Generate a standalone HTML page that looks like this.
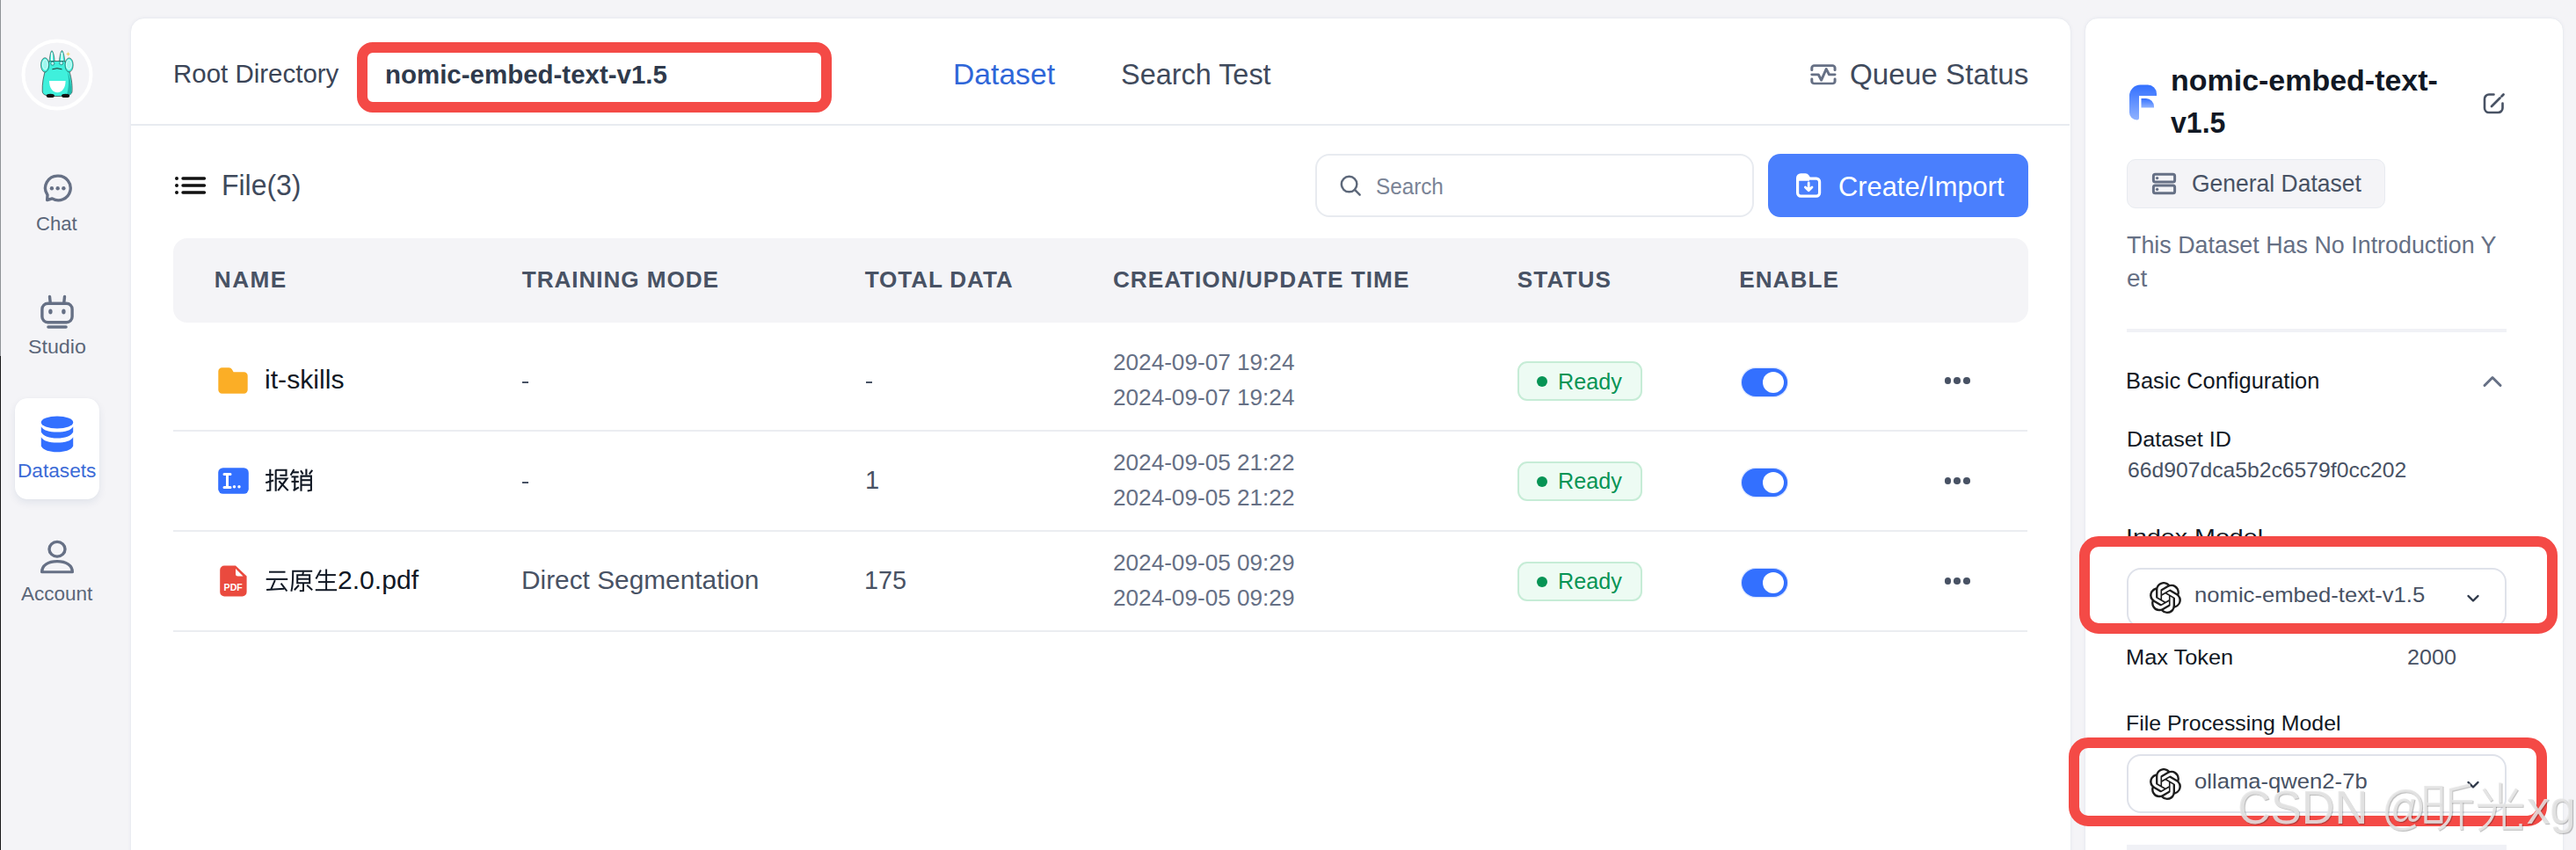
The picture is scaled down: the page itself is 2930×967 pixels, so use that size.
<!DOCTYPE html>
<html><head><meta charset="utf-8"><title>FastGPT Dataset</title>
<style>
html,body{margin:0;padding:0}
body{width:2930px;height:967px;overflow:hidden;position:relative;background:#f4f4f7;font-family:"Liberation Sans",sans-serif}
.a{position:absolute;display:block}
.t{position:absolute;white-space:nowrap;line-height:1;transform-origin:0 0;font-family:"Liberation Sans",sans-serif}
</style></head><body>
<div class="a" style="left:0px;top:0px;width:1px;height:967px;background:#8f9297"></div>
<div class="a" style="left:0px;top:405px;width:1px;height:562px;background:#1a1a1a"></div>
<svg class="a" style="left:24px;top:44px;width:82px;height:82px;" viewBox="0 0 82 82" preserveAspectRatio="none"><circle cx="41" cy="41" r="38.5" fill="#f4f4f7" stroke="#ffffff" stroke-width="4"/></svg>
<svg class="a" style="left:40px;top:50px;width:50px;height:70px;" viewBox="0 0 50 70" preserveAspectRatio="none"><path d="M16 21 C16.5 14 17.5 8.5 18.9 7.6 C20.5 8.5 22 14 22.2 21Z" fill="#3ff0dc" stroke="#222" stroke-width="0.5"/><path d="M27.2 21 C27.8 14 29 8.5 30.5 7.4 C32 8.5 33.5 14 33.8 21Z" fill="#3ff0dc" stroke="#222" stroke-width="0.5"/><path d="M18 10.5 C18.6 9 19.4 9 19.8 10.5 L20 19 L18 19Z" fill="#e9fffb"/><path d="M29.5 10.5 C30.1 9 30.9 9 31.3 10.5 L31.5 19 L29.5 19Z" fill="#e9fffb"/><path d="M12.6 27 C12.5 22 14.5 19.5 19 19.5 L31 19.5 C35.5 19.5 37.5 22 37.4 27 C41 36 42.5 46 42 54 C41.6 58 38 59.5 25 59.5 C12 59.5 8.6 58 8.2 54 C7.8 46 9.2 36 12.6 27Z" fill="#3ff0dc" stroke="#1b1b1b" stroke-width="0.6"/><path d="M36.5 30 C40 38 41.6 47 41 56 C40 58 38 59 35.5 59.2 C38.5 50 38.8 40 36.5 30Z" fill="#20b9ad"/><ellipse cx="11.1" cy="23.9" rx="4.6" ry="8.2" fill="#3ff0dc" stroke="#1b1b1b" stroke-width="0.5"/><ellipse cx="11.3" cy="23.5" rx="3" ry="5.8" fill="#9ff8ee" stroke="#fff" stroke-width="0.8"/><ellipse cx="38.6" cy="23.9" rx="4.6" ry="8" fill="#3ff0dc" stroke="#1b1b1b" stroke-width="0.5"/><ellipse cx="38.4" cy="23.5" rx="3" ry="5.6" fill="#9ff8ee" stroke="#fff" stroke-width="0.8"/><circle cx="19.8" cy="22.2" r="2" fill="#bff" stroke="#137a72" stroke-width="0.8"/><circle cx="29.7" cy="21.8" r="2" fill="#bff" stroke="#137a72" stroke-width="0.8"/><path d="M19.4 28.8 Q25 26.6 30.5 28.8" stroke="#1b1b1b" stroke-width="0.9" fill="none"/><path d="M16 42 H34.6 C34.6 50 30.5 55.2 25.3 55.2 C20 55.2 16 50 16 42Z" fill="#ffffff"/><ellipse cx="17.3" cy="58.9" rx="4.6" ry="2.2" fill="#111"/><ellipse cx="34.6" cy="58.9" rx="4.6" ry="2.2" fill="#111"/><path d="M37.5 9 l0.8 1.7 1.7 0.8 -1.7 0.8 -0.8 1.7 -0.8 -1.7 -1.7 -0.8 1.7 -0.8z" fill="#f3d36b"/></svg>
<svg class="a" style="left:47.9px;top:197.1px;width:36.4px;height:33.70000000000002px;" viewBox="0 0 40 37" preserveAspectRatio="none"><path d="M20 3.4 A15.2 15.2 0 1 1 12.5 31.7 L6.2 33.6 L6.6 27.2 A15.2 15.2 0 0 1 20 3.4Z" fill="none" stroke="#667085" stroke-width="3.7" stroke-linejoin="round"/><circle cx="12" cy="19" r="2.4" fill="#667085"/><circle cx="19.4" cy="19" r="2.4" fill="#667085"/><circle cx="26.8" cy="19" r="2.4" fill="#667085"/></svg>
<svg class="a" style="left:44px;top:334px;width:42px;height:42px;" viewBox="0 0 42 42" preserveAspectRatio="none"><rect x="3.9" y="11.2" width="34.2" height="21.6" rx="6.5" fill="none" stroke="#667085" stroke-width="3.4"/><path d="M12.5 3.5 L13.2 10 M29.5 3.5 L28.8 10" stroke="#667085" stroke-width="3.4" stroke-linecap="round"/><ellipse cx="13.4" cy="20.5" rx="2.2" ry="3" fill="#667085"/><ellipse cx="28.4" cy="20.5" rx="2.2" ry="3" fill="#667085"/><path d="M11 38 L31 38" stroke="#667085" stroke-width="3.6" stroke-linecap="round"/></svg>
<div class="a" style="left:17px;top:453px;width:96px;height:115px;background:#fff;border-radius:14px;box-shadow:0 4px 10px rgba(19,51,107,0.08),0 0 1px rgba(19,51,107,0.08)"></div>
<svg class="a" style="left:46px;top:473px;width:38px;height:42px;" viewBox="0 0 38 42" preserveAspectRatio="none"><ellipse cx="19" cy="7.5" rx="18.2" ry="6.9" fill="#3370ff"/><path d="M0.8 12.2 C3 16.5 10 18.6 19 18.6 C28 18.6 35 16.5 37.2 12.2 L37.2 18.4 C35 23 28 25.4 19 25.4 C10 25.4 3 23 0.8 18.4Z" fill="#3370ff"/><path d="M0.8 24.2 C3 28.5 10 30.6 19 30.6 C28 30.6 35 28.5 37.2 24.2 L37.2 34.5 C35 38.8 28 41.3 19 41.3 C10 41.3 3 38.8 0.8 34.5Z" fill="#3370ff"/></svg>
<svg class="a" style="left:44px;top:614px;width:42px;height:40px;" viewBox="0 0 42 43" preserveAspectRatio="none"><circle cx="21" cy="11.5" r="9" fill="none" stroke="#667085" stroke-width="3.4"/><path d="M3.7 39.5 C3.7 31 11 26.5 21 26.5 C31 26.5 38.3 31 38.3 39.5 Z" fill="none" stroke="#667085" stroke-width="3.4" stroke-linejoin="round"/></svg>
<div class="a" style="left:148px;top:20px;width:2208px;height:980px;background:#fff;border:1px solid #eaecf1;border-radius:16px;box-sizing:border-box;box-shadow:0 0 4px rgba(19,51,107,0.045)"></div>
<div class="a" style="left:149px;top:141px;width:2205px;height:2px;background:#e8ebf0"></div>
<div class="a" style="left:406px;top:48px;width:540px;height:80px;border:12px solid #f44a46;border-radius:18px;box-sizing:border-box"></div>
<svg class="a" style="left:2058.1px;top:73px;width:31.90000000000009px;height:23.700000000000003px;" viewBox="0 0 34 28" preserveAspectRatio="none"><path d="M3 8 V5 A3 3 0 0 1 6 2 H28 A3 3 0 0 1 31 5 V8 M3 20 V23 A3 3 0 0 0 6 26 H28 A3 3 0 0 0 31 23 V20" fill="none" stroke="#667085" stroke-width="3.2" stroke-linecap="round"/><path d="M3 14 H11 L14.5 21.5 L20.5 6.5 L24 14 H31" fill="none" stroke="#667085" stroke-width="3.2" stroke-linecap="round" stroke-linejoin="round"/></svg>
<svg class="a" style="left:198px;top:200px;width:37px;height:22px;" viewBox="0 0 37 22" preserveAspectRatio="none"><circle cx="3" cy="3" r="2" fill="#111"/><circle cx="3" cy="11" r="2" fill="#111"/><circle cx="3" cy="19" r="2" fill="#111"/><path d="M10 3 H34.5 M10 11 H34.5 M10 19 H34.5" stroke="#111" stroke-width="3.4" stroke-linecap="round"/></svg>
<div class="a" style="left:1496px;top:175px;width:499px;height:72px;border:2px solid #e8ebf0;border-radius:16px;box-sizing:border-box;background:#fff"></div>
<svg class="a" style="left:1522.8px;top:197.7px;width:26.299999999999955px;height:26.30000000000001px;" viewBox="0 0 30 30" preserveAspectRatio="none"><circle cx="13.2" cy="13.2" r="10" fill="none" stroke="#5d687a" stroke-width="2.8"/><path d="M20.5 20.5 L27 27" stroke="#5d687a" stroke-width="2.8" stroke-linecap="round"/></svg>
<div class="a" style="left:2011px;top:175px;width:296px;height:72px;background:#4a7ffd;border-radius:14px"></div>
<svg class="a" style="left:2040px;top:196px;width:33px;height:30px;" viewBox="0 0 33 30" preserveAspectRatio="none"><path d="M4.6 22.5 V6.5 A3.6 3.6 0 0 1 8.2 2.9 H13.5 A3 3 0 0 1 16 4.2 L18 7.2 H26 A3.6 3.6 0 0 1 29.6 10.8 V23.5 A3.6 3.6 0 0 1 26 27.1 H8.2 A3.6 3.6 0 0 1 4.6 23.5Z" fill="none" stroke="#fff" stroke-width="3.2" stroke-linejoin="round"/><path d="M4.6 6.5 A3.6 3.6 0 0 1 8.2 2.9 H13.5 A3 3 0 0 1 16 4.2 L18 7.2 V9.8 H4.6Z" fill="#fff"/><path d="M17.2 12 V20.5 M13.4 17 L17.2 20.7 L21 17" fill="none" stroke="#fff" stroke-width="2.8" stroke-linecap="round" stroke-linejoin="round"/></svg>
<div class="a" style="left:197px;top:271px;width:2109.5px;height:96px;background:#f4f4f7;border-radius:16px"></div>
<div class="a" style="left:197px;top:489px;width:2109px;height:2px;background:#ebedf1"></div>
<div class="a" style="left:197px;top:603px;width:2109px;height:2px;background:#ebedf1"></div>
<div class="a" style="left:197px;top:717px;width:2109px;height:2px;background:#ebedf1"></div>
<svg class="a" style="left:248px;top:418px;width:34px;height:30px;" viewBox="0 0 34 30" preserveAspectRatio="none"><path d="M0.3 4.5 A4.2 4.2 0 0 1 4.5 0.3 H12.5 A4 4 0 0 1 15.9 2.3 L17.6 5.2 H29.5 A4.2 4.2 0 0 1 33.7 9.4 V25.5 A4.2 4.2 0 0 1 29.5 29.7 H4.5 A4.2 4.2 0 0 1 0.3 25.5Z" fill="#fbae26"/></svg>
<svg class="a" style="left:248px;top:532px;width:35px;height:30px;" viewBox="0 0 35 30" preserveAspectRatio="none"><rect x="0.2" y="0.2" width="34.6" height="29.6" rx="5.5" fill="#3370ff"/><path d="M7 7.5 H14 M10.5 7.5 V22.5 M7 22.5 H14" stroke="#fff" stroke-width="3" stroke-linecap="round"/><circle cx="18.5" cy="21.8" r="1.7" fill="#fff"/><circle cx="24" cy="21.8" r="1.7" fill="#fff"/></svg>
<svg class="a" style="left:250px;top:643px;width:31px;height:36px;" viewBox="0 0 31 36" preserveAspectRatio="none"><path d="M0.2 5.5 A5 5 0 0 1 5.2 0.5 H18 L30.6 12.5 V30.5 A5 5 0 0 1 25.6 35.5 H5.2 A5 5 0 0 1 0.2 30.5Z" fill="#ea4a3e"/><path d="M18 4 L26.5 12.4 H20.5 A2.5 2.5 0 0 1 18 9.9Z" fill="#fff"/><text x="15.2" y="29.4" font-family="Liberation Sans" font-weight="700" font-size="10.6" fill="#fff" text-anchor="middle">PDF</text></svg>
<div class="a" style="left:594px;top:434px;width:7px;height:2.3999999999999773px;background:#485264"></div>
<div class="a" style="left:984.5px;top:434px;width:7.0px;height:2.3999999999999773px;background:#485264"></div>
<div class="a" style="left:594px;top:548px;width:7px;height:2.3999999999999773px;background:#485264"></div>
<div class="a" style="left:1726px;top:411px;width:142px;height:45px;background:#edfbf3;border:2px solid #c6ecd6;border-radius:11px;box-sizing:border-box"></div>
<div class="a" style="left:1748px;top:427.6px;width:12.4px;height:12.4px;border-radius:50%;background:#079455"></div>
<div class="a" style="left:1981.3px;top:418.8px;width:51.40000000000009px;height:32.39999999999998px;background:#3370ff;border-radius:17px;box-shadow:0 0 0 1.2px #d9e4ff"></div>
<div class="a" style="left:2004.9px;top:422.7px;width:24.2px;height:24.2px;border-radius:50%;background:#fff"></div>
<div class="a" style="left:2211.5px;top:429.2px;width:7.6px;height:7.6px;border-radius:50%;background:#485264"></div>
<div class="a" style="left:2222.3px;top:429.2px;width:7.6px;height:7.6px;border-radius:50%;background:#485264"></div>
<div class="a" style="left:2233.1px;top:429.2px;width:7.6px;height:7.6px;border-radius:50%;background:#485264"></div>
<div class="a" style="left:1726px;top:525px;width:142px;height:45px;background:#edfbf3;border:2px solid #c6ecd6;border-radius:11px;box-sizing:border-box"></div>
<div class="a" style="left:1748px;top:541.6px;width:12.4px;height:12.4px;border-radius:50%;background:#079455"></div>
<div class="a" style="left:1981.3px;top:532.8px;width:51.40000000000009px;height:32.40000000000009px;background:#3370ff;border-radius:17px;box-shadow:0 0 0 1.2px #d9e4ff"></div>
<div class="a" style="left:2004.9px;top:536.7px;width:24.2px;height:24.2px;border-radius:50%;background:#fff"></div>
<div class="a" style="left:2211.5px;top:543.2px;width:7.6px;height:7.6px;border-radius:50%;background:#485264"></div>
<div class="a" style="left:2222.3px;top:543.2px;width:7.6px;height:7.6px;border-radius:50%;background:#485264"></div>
<div class="a" style="left:2233.1px;top:543.2px;width:7.6px;height:7.6px;border-radius:50%;background:#485264"></div>
<div class="a" style="left:1726px;top:639px;width:142px;height:45px;background:#edfbf3;border:2px solid #c6ecd6;border-radius:11px;box-sizing:border-box"></div>
<div class="a" style="left:1748px;top:655.6px;width:12.4px;height:12.4px;border-radius:50%;background:#079455"></div>
<div class="a" style="left:1981.3px;top:646.8px;width:51.40000000000009px;height:32.40000000000009px;background:#3370ff;border-radius:17px;box-shadow:0 0 0 1.2px #d9e4ff"></div>
<div class="a" style="left:2004.9px;top:650.7px;width:24.2px;height:24.2px;border-radius:50%;background:#fff"></div>
<div class="a" style="left:2211.5px;top:657.2px;width:7.6px;height:7.6px;border-radius:50%;background:#485264"></div>
<div class="a" style="left:2222.3px;top:657.2px;width:7.6px;height:7.6px;border-radius:50%;background:#485264"></div>
<div class="a" style="left:2233.1px;top:657.2px;width:7.6px;height:7.6px;border-radius:50%;background:#485264"></div>
<div class="a" style="left:2370.5px;top:20px;width:545.5px;height:980px;background:#fff;border:1px solid #eaecf1;border-radius:15px;box-sizing:border-box;box-shadow:0 0 4px rgba(19,51,107,0.045)"></div>
<svg class="a" style="left:2421px;top:96px;width:34px;height:41px;" viewBox="0 0 34 41" preserveAspectRatio="none"><defs><linearGradient id="lg" x1="0" y1="0" x2="0" y2="1"><stop offset="0" stop-color="#3370ff"/><stop offset="1" stop-color="#8fb2ff"/></linearGradient></defs><path d="M1 13 A12.5 12.5 0 0 1 13.5 0.5 H22 A10 10 0 0 1 32 10.5 V13 H12 V38 A2.5 2.5 0 0 1 9.5 40.5 A8.5 8.5 0 0 1 1 32Z" fill="url(#lg)"/><path d="M14.5 16 H20 A9 9 0 0 1 29 25 V26.5 H14.5Z" fill="url(#lg)"/></svg>
<svg class="a" style="left:2823px;top:104px;width:28px;height:27px;" viewBox="0 0 28 27" preserveAspectRatio="none"><path d="M13.5 3.5 H8 A5 5 0 0 0 3 8.5 V19 A5 5 0 0 0 8 24 H18.5 A5 5 0 0 0 23.5 19 V13.5" fill="none" stroke="#485264" stroke-width="2.6" stroke-linecap="round"/><path d="M11 17 L20.5 7.5 M22.5 5.5 L24.5 3.5" stroke="#485264" stroke-width="2.8" stroke-linecap="round"/></svg>
<div class="a" style="left:2419px;top:181px;width:294px;height:56px;background:#f4f4f7;border:1.5px solid #e8ebf0;border-radius:10px;box-sizing:border-box"></div>
<svg class="a" style="left:2446px;top:195px;width:31px;height:28px;" viewBox="0 0 31 28" preserveAspectRatio="none"><rect x="3.4" y="3.2" width="24.2" height="8.8" rx="2" fill="none" stroke="#667085" stroke-width="3"/><rect x="3.4" y="16" width="24.2" height="8.8" rx="2" fill="none" stroke="#667085" stroke-width="3"/><circle cx="7.6" cy="7.6" r="1.7" fill="#667085"/><circle cx="7.6" cy="20.4" r="1.7" fill="#667085"/></svg>
<div class="a" style="left:2419px;top:374px;width:432px;height:4px;background:#f0f1f6"></div>
<svg class="a" style="left:2823px;top:425px;width:24px;height:17px;" viewBox="0 0 24 17" preserveAspectRatio="none"><path d="M3 13.5 L12 4.5 L21 13.5" fill="none" stroke="#667085" stroke-width="3" stroke-linecap="round" stroke-linejoin="round"/></svg>
<div class="a" style="left:2419px;top:646px;width:432px;height:68px;border:2px solid #dfe2ea;border-radius:16px;box-sizing:border-box;background:#fff"></div>
<svg class="a" style="left:2445px;top:662px;width:36px;height:36px;" viewBox="0 0 24 24" preserveAspectRatio="none"><path d="M22.2819 9.8211a5.9847 5.9847 0 0 0-.5157-4.9108 6.0462 6.0462 0 0 0-6.5098-2.9A6.0651 6.0651 0 0 0 4.9807 4.1818a5.9847 5.9847 0 0 0-3.9977 2.9 6.0462 6.0462 0 0 0 .7427 7.0966 5.98 5.98 0 0 0 .511 4.9107 6.051 6.051 0 0 0 6.5146 2.9001A5.9847 5.9847 0 0 0 13.2599 24a6.0557 6.0557 0 0 0 5.7718-4.2058 5.9894 5.9894 0 0 0 3.9977-2.9001 6.0557 6.0557 0 0 0-.7475-7.0729zm-9.022 12.6081a4.4755 4.4755 0 0 1-2.8764-1.0408l.1419-.0804 4.7783-2.7582a.7948.7948 0 0 0 .3927-.6813v-6.7369l2.02 1.1686a.071.071 0 0 1 .038.052v5.5826a4.504 4.504 0 0 1-4.4945 4.4944zm-9.6607-4.1254a4.4708 4.4708 0 0 1-.5346-3.0137l.142.0852 4.783 2.7582a.7712.7712 0 0 0 .7806 0l5.8428-3.3685v2.3324a.0804.0804 0 0 1-.0332.0615L9.74 19.9502a4.4992 4.4992 0 0 1-6.1408-1.6464zM2.3408 7.8956a4.485 4.485 0 0 1 2.3655-1.9728V11.6a.7664.7664 0 0 0 .3879.6765l5.8144 3.3543-2.0201 1.1685a.0757.0757 0 0 1-.071 0l-4.8303-2.7865A4.504 4.504 0 0 1 2.3408 7.872zm16.5963 3.8558L13.1038 8.364 15.1192 7.2a.0757.0757 0 0 1 .071 0l4.8303 2.7913a4.4944 4.4944 0 0 1-.6765 8.1042v-5.6772a.79.79 0 0 0-.407-.667zm2.0107-3.0231l-.142-.0852-4.7735-2.7818a.7759.7759 0 0 0-.7854 0L9.409 9.2297V6.8974a.0662.0662 0 0 1 .0284-.0615l4.8303-2.7866a4.4992 4.4992 0 0 1 6.6802 4.66zM8.3065 12.863l-2.02-1.1638a.0804.0804 0 0 1-.038-.0567V6.0742a4.4992 4.4992 0 0 1 7.3757-3.4537l-.142.0805L8.704 5.459a.7948.7948 0 0 0-.3927.6813zm1.0976-2.3654l2.602-1.4998 2.6069 1.4998v2.9994l-2.5974 1.4997-2.6067-1.4997Z" fill="#1d1d1d"/></svg>
<svg class="a" style="left:2804px;top:673px;width:18px;height:15px;" viewBox="0 0 18 15" preserveAspectRatio="none"><path d="M3.5 5 L9 10.5 L14.5 5" fill="none" stroke="#2d3748" stroke-width="2.4" stroke-linecap="round" stroke-linejoin="round"/></svg>
<div class="a" style="left:2419px;top:858px;width:432px;height:67px;border:2px solid #dfe2ea;border-radius:16px;box-sizing:border-box;background:#fff"></div>
<svg class="a" style="left:2445px;top:874px;width:36px;height:36px;" viewBox="0 0 24 24" preserveAspectRatio="none"><path d="M22.2819 9.8211a5.9847 5.9847 0 0 0-.5157-4.9108 6.0462 6.0462 0 0 0-6.5098-2.9A6.0651 6.0651 0 0 0 4.9807 4.1818a5.9847 5.9847 0 0 0-3.9977 2.9 6.0462 6.0462 0 0 0 .7427 7.0966 5.98 5.98 0 0 0 .511 4.9107 6.051 6.051 0 0 0 6.5146 2.9001A5.9847 5.9847 0 0 0 13.2599 24a6.0557 6.0557 0 0 0 5.7718-4.2058 5.9894 5.9894 0 0 0 3.9977-2.9001 6.0557 6.0557 0 0 0-.7475-7.0729zm-9.022 12.6081a4.4755 4.4755 0 0 1-2.8764-1.0408l.1419-.0804 4.7783-2.7582a.7948.7948 0 0 0 .3927-.6813v-6.7369l2.02 1.1686a.071.071 0 0 1 .038.052v5.5826a4.504 4.504 0 0 1-4.4945 4.4944zm-9.6607-4.1254a4.4708 4.4708 0 0 1-.5346-3.0137l.142.0852 4.783 2.7582a.7712.7712 0 0 0 .7806 0l5.8428-3.3685v2.3324a.0804.0804 0 0 1-.0332.0615L9.74 19.9502a4.4992 4.4992 0 0 1-6.1408-1.6464zM2.3408 7.8956a4.485 4.485 0 0 1 2.3655-1.9728V11.6a.7664.7664 0 0 0 .3879.6765l5.8144 3.3543-2.0201 1.1685a.0757.0757 0 0 1-.071 0l-4.8303-2.7865A4.504 4.504 0 0 1 2.3408 7.872zm16.5963 3.8558L13.1038 8.364 15.1192 7.2a.0757.0757 0 0 1 .071 0l4.8303 2.7913a4.4944 4.4944 0 0 1-.6765 8.1042v-5.6772a.79.79 0 0 0-.407-.667zm2.0107-3.0231l-.142-.0852-4.7735-2.7818a.7759.7759 0 0 0-.7854 0L9.409 9.2297V6.8974a.0662.0662 0 0 1 .0284-.0615l4.8303-2.7866a4.4992 4.4992 0 0 1 6.6802 4.66zM8.3065 12.863l-2.02-1.1638a.0804.0804 0 0 1-.038-.0567V6.0742a4.4992 4.4992 0 0 1 7.3757-3.4537l-.142.0805L8.704 5.459a.7948.7948 0 0 0-.3927.6813zm1.0976-2.3654l2.602-1.4998 2.6069 1.4998v2.9994l-2.5974 1.4997-2.6067-1.4997Z" fill="#1d1d1d"/></svg>
<svg class="a" style="left:2804px;top:885px;width:18px;height:15px;" viewBox="0 0 18 15" preserveAspectRatio="none"><path d="M3.5 5 L9 10.5 L14.5 5" fill="none" stroke="#2d3748" stroke-width="2.4" stroke-linecap="round" stroke-linejoin="round"/></svg>
<div class="a" style="left:2419px;top:961px;width:432px;height:9px;background:#f0f1f6"></div>
<svg class="a" style="left:298px;top:528px;width:62px;height:36px;" viewBox="0 0 62 36" preserveAspectRatio="none"><g fill="none" stroke="#111824" stroke-width="2.1" stroke-linecap="butt" stroke-linejoin="miter"><path d="M4.2 12.1 H13.1"/><path d="M9.3 5.7 V29.7 L5.1 30.3"/><path d="M4.2 21.2 L13.1 18.6"/><path d="M15.7 6.4 V30.8"/><path d="M15.7 6.8 H27.5 V12.7 H20.3"/><path d="M15.7 16.5 H28.4 L18.2 30.1"/><path d="M19.3 19.2 L29.7 30.1"/><path d="M36.4 5.9 L32.6 12.7"/><path d="M34.7 9.3 H41.9"/><path d="M33.5 14.4 H41.5"/><path d="M33.5 19.9 H41.9"/><path d="M37.3 14.4 V29.7"/><path d="M35.6 30 L41.9 26.3"/><path d="M50.4 5.5 V12.7"/><path d="M44.0 7.2 L46.6 11.4"/><path d="M57.2 6.8 L53.8 11.4"/><path d="M44.5 30.8 V13.6 H55.9 V29.7 L51.7 30.5"/><path d="M44.5 18.2 H55.9"/><path d="M44.5 23.7 H55.9"/></g></svg>
<svg class="a" style="left:298px;top:642px;width:90px;height:36px;" viewBox="0 0 90 36" preserveAspectRatio="none"><g fill="none" stroke="#111824" stroke-width="2.0" stroke-linecap="butt" stroke-linejoin="miter"><path d="M8.0 8.7 H26.5"/><path d="M4.7 16.9 H29.2"/><path d="M14.8 18.2 L10.4 28.2"/><path d="M5.1 29.0 L25.4 27.7"/><path d="M21.6 21.6 L28.4 30.5"/><path d="M57.2 7.8 H35.2 C35.2 20 34.9 26 33.3 30.8"/><path d="M47.0 8.5 L46.2 12.3"/><path d="M40.2 12.3 H54.2 V21.2 H40.2 Z"/><path d="M40.2 16.7 H54.2"/><path d="M47.0 21.2 V30.0 L42.8 30.3"/><path d="M41.9 23.7 L36.8 29.2"/><path d="M51.2 23.7 L57.2 29.2"/><path d="M66.9 6.4 L61.4 16.5"/><path d="M65.2 12.1 H83.9"/><path d="M73.1 5.5 V29.2"/><path d="M64.0 20.1 H82.8"/><path d="M60.8 29.2 H85.1"/></g></svg>
<div class="t" style="left:41.26px;top:244.43px;font-size:21.22px;font-weight:400;color:#5b6679;transform:scaleX(1.0386);">Chat</div>
<div class="t" style="left:32.21px;top:384.03px;font-size:21.22px;font-weight:400;color:#5b6679;transform:scaleX(1.0948);">Studio</div>
<div class="t" style="left:19.86px;top:524.93px;font-size:21.22px;font-weight:400;color:#3b6ad6;transform:scaleX(1.0679);">Datasets</div>
<div class="t" style="left:23.80px;top:665.03px;font-size:21.22px;font-weight:400;color:#5b6679;transform:scaleX(1.0610);">Account</div>
<div class="t" style="left:197.37px;top:70.29px;font-size:29.07px;font-weight:400;color:#3b4557;transform:scaleX(1.0141);">Root Directory</div>
<div class="t" style="left:438.30px;top:69.72px;font-size:29.51px;font-weight:700;color:#2f3a4c;transform:scaleX(0.9987);">nomic-embed-text-v1.5</div>
<div class="t" style="left:1084.38px;top:67.59px;font-size:33.43px;font-weight:400;color:#2f66d8;transform:scaleX(1.0071);">Dataset</div>
<div class="t" style="left:1274.76px;top:67.59px;font-size:33.43px;font-weight:400;color:#3f4a5c;transform:scaleX(0.9701);">Search Test</div>
<div class="t" style="left:2104.01px;top:67.69px;font-size:33.43px;font-weight:400;color:#3f4a5c;transform:scaleX(0.9950);">Queue Status</div>
<div class="t" style="left:252.13px;top:193.69px;font-size:33.43px;font-weight:400;color:#3f4a5c;transform:scaleX(0.9556);">File(3)</div>
<div class="t" style="left:1565.47px;top:199.35px;font-size:26.16px;font-weight:400;color:#7a8496;transform:scaleX(0.9275);">Search</div>
<div class="t" style="left:2090.99px;top:196.66px;font-size:30.52px;font-weight:400;color:#ffffff;transform:scaleX(1.0108);">Create/Import</div>
<div class="t" style="left:243.80px;top:305.05px;font-size:26.16px;font-weight:700;color:#485264;transform:scaleX(1.0000);letter-spacing:1.500px;">NAME</div>
<div class="t" style="left:593.80px;top:305.05px;font-size:26.16px;font-weight:700;color:#485264;transform:scaleX(1.0000);letter-spacing:0.917px;">TRAINING MODE</div>
<div class="t" style="left:983.70px;top:305.05px;font-size:26.16px;font-weight:700;color:#485264;transform:scaleX(1.0000);letter-spacing:0.856px;">TOTAL DATA</div>
<div class="t" style="left:1265.90px;top:305.05px;font-size:26.16px;font-weight:700;color:#485264;transform:scaleX(1.0000);letter-spacing:1.011px;">CREATION/UPDATE TIME</div>
<div class="t" style="left:1725.80px;top:305.05px;font-size:26.16px;font-weight:700;color:#485264;transform:scaleX(1.0000);letter-spacing:1.060px;">STATUS</div>
<div class="t" style="left:1978.20px;top:305.05px;font-size:26.16px;font-weight:700;color:#485264;transform:scaleX(1.0000);letter-spacing:1.040px;">ENABLE</div>
<div class="t" style="left:300.52px;top:418.39px;font-size:29.07px;font-weight:400;color:#111824;transform:scaleX(1.0381);">it-skills</div>
<div class="t" style="left:383.96px;top:646.49px;font-size:29.07px;font-weight:400;color:#111824;transform:scaleX(1.0364);">2.0.pdf</div>
<div class="t" style="left:593.15px;top:646.49px;font-size:29.07px;font-weight:400;color:#485264;transform:scaleX(1.0265);">Direct Segmentation</div>
<div class="t" style="left:984.00px;top:532.19px;font-size:29.07px;font-weight:400;color:#485264;transform:scaleX(1.0000);">1</div>
<div class="t" style="left:983.42px;top:646.49px;font-size:29.07px;font-weight:400;color:#485264;transform:scaleX(0.9911);">175</div>
<div class="t" style="left:1266.02px;top:399.28px;font-size:26.60px;font-weight:400;color:#667085;transform:scaleX(0.9832);">2024-09-07 19:24</div>
<div class="t" style="left:1266.02px;top:439.28px;font-size:26.60px;font-weight:400;color:#667085;transform:scaleX(0.9832);">2024-09-07 19:24</div>
<div class="t" style="left:1266.02px;top:513.28px;font-size:26.60px;font-weight:400;color:#667085;transform:scaleX(0.9832);">2024-09-05 21:22</div>
<div class="t" style="left:1266.02px;top:553.28px;font-size:26.60px;font-weight:400;color:#667085;transform:scaleX(0.9832);">2024-09-05 21:22</div>
<div class="t" style="left:1266.02px;top:627.28px;font-size:26.60px;font-weight:400;color:#667085;transform:scaleX(0.9832);">2024-09-05 09:29</div>
<div class="t" style="left:1266.02px;top:667.28px;font-size:26.60px;font-weight:400;color:#667085;transform:scaleX(0.9832);">2024-09-05 09:29</div>
<div class="t" style="left:1772.48px;top:420.65px;font-size:26.16px;font-weight:400;color:#079455;transform:scaleX(0.9622);">Ready</div>
<div class="t" style="left:1772.48px;top:534.15px;font-size:26.16px;font-weight:400;color:#079455;transform:scaleX(0.9622);">Ready</div>
<div class="t" style="left:1772.48px;top:647.65px;font-size:26.16px;font-weight:400;color:#079455;transform:scaleX(0.9622);">Ready</div>
<div class="t" style="left:2468.51px;top:75.93px;font-size:32.56px;font-weight:700;color:#111824;transform:scaleX(1.0437);">nomic-embed-text-</div>
<div class="t" style="left:2469.30px;top:124.43px;font-size:32.56px;font-weight:700;color:#111824;transform:scaleX(0.9857);">v1.5</div>
<div class="t" style="left:2493.23px;top:194.66px;font-size:27.33px;font-weight:400;color:#485264;transform:scaleX(0.9687);">General Dataset</div>
<div class="t" style="left:2418.61px;top:266.11px;font-size:27.04px;font-weight:400;color:#667085;transform:scaleX(0.9936);">This Dataset Has No Introduction Y</div>
<div class="t" style="left:2418.57px;top:303.71px;font-size:27.04px;font-weight:400;color:#667085;transform:scaleX(1.0318);">et</div>
<div class="t" style="left:2418.47px;top:420.83px;font-size:25.00px;font-weight:400;color:#111824;transform:scaleX(1.0164);">Basic Configuration</div>
<div class="t" style="left:2418.51px;top:487.67px;font-size:24.13px;font-weight:400;color:#111824;transform:scaleX(1.0432);">Dataset ID</div>
<div class="t" style="left:2419.58px;top:523.07px;font-size:24.13px;font-weight:400;color:#485264;transform:scaleX(1.0240);">66d907dca5b2c6579f0cc202</div>
<div class="t" style="left:2417.62px;top:599.07px;font-size:24.13px;font-weight:400;color:#111824;transform:scaleX(1.1875);">Index Model</div>
<div class="t" style="left:2495.84px;top:666.24px;font-size:23.69px;font-weight:400;color:#485264;transform:scaleX(1.0824);">nomic-embed-text-v1.5</div>
<div class="t" style="left:2418.40px;top:735.67px;font-size:24.13px;font-weight:400;color:#111824;transform:scaleX(1.0513);">Max Token</div>
<div class="t" style="left:2738.26px;top:735.67px;font-size:24.13px;font-weight:400;color:#485264;transform:scaleX(1.0423);">2000</div>
<div class="t" style="left:2418.44px;top:811.17px;font-size:24.13px;font-weight:400;color:#111824;transform:scaleX(1.0303);">File Processing Model</div>
<div class="t" style="left:2496.42px;top:877.54px;font-size:23.69px;font-weight:400;color:#485264;transform:scaleX(1.0822);">ollama-qwen2-7b</div>
<div class="a" style="left:2365px;top:610px;width:544px;height:111px;border:12px solid #f44a46;border-radius:22px;box-sizing:border-box"></div>
<div class="a" style="left:2353px;top:839px;width:544px;height:101px;border:12px solid #f44a46;border-radius:22px;box-sizing:border-box"></div>
<div class="t" style="left:2545.08px;top:892.06px;font-size:53.78px;color:rgba(232,232,232,0.86);transform:scaleX(0.9724);text-shadow:1px 1px 1px rgba(0,0,0,0.28)">CSDN</div>
<div class="t" style="left:2708.80px;top:892.06px;font-size:53.78px;color:rgba(232,232,232,0.86);transform:scaleX(0.9239);text-shadow:1px 1px 1px rgba(0,0,0,0.28)">@</div>
<div class="t" style="left:2873.62px;top:892.06px;font-size:53.78px;color:rgba(232,232,232,0.86);transform:scaleX(0.9774);text-shadow:1px 1px 1px rgba(0,0,0,0.28)">xg</div>
<svg class="a" style="left:0;top:0;width:2930px;height:967px;overflow:visible" viewBox="0 0 2930 967"><g fill="none" stroke="rgba(0,0,0,0.22)" stroke-width="3.6" transform="translate(1,1)"><path d="M2759 935 V895.7 H2776.8 V935 Z"/><path d="M2759 914.9 H2776.8"/><path d="M2759 935 H2776.8"/><path d="M2809.8 893 L2787.5 898.4 V922.5 C2787.5 932 2782 939 2773.2 943.5"/><path d="M2787.5 911.8 H2812.5"/><path d="M2799.6 911.8 V944"/><path d="M2843.75 890.4 V913.6"/><path d="M2825 897.5 L2833.9 910.9"/><path d="M2862.5 897.5 L2853.6 911.8"/><path d="M2817.9 916.25 H2869.6"/><path d="M2837.5 916.25 C2837 930 2830 939 2819.6 944.5"/><path d="M2848.2 916.25 V942.1 H2867 V937"/></g><g fill="none" stroke="#e8e8e8" stroke-width="3.4" opacity="0.88"><path d="M2759 935 V895.7 H2776.8 V935 Z"/><path d="M2759 914.9 H2776.8"/><path d="M2759 935 H2776.8"/><path d="M2809.8 893 L2787.5 898.4 V922.5 C2787.5 932 2782 939 2773.2 943.5"/><path d="M2787.5 911.8 H2812.5"/><path d="M2799.6 911.8 V944"/><path d="M2843.75 890.4 V913.6"/><path d="M2825 897.5 L2833.9 910.9"/><path d="M2862.5 897.5 L2853.6 911.8"/><path d="M2817.9 916.25 H2869.6"/><path d="M2837.5 916.25 C2837 930 2830 939 2819.6 944.5"/><path d="M2848.2 916.25 V942.1 H2867 V937"/></g></svg>
</body></html>
